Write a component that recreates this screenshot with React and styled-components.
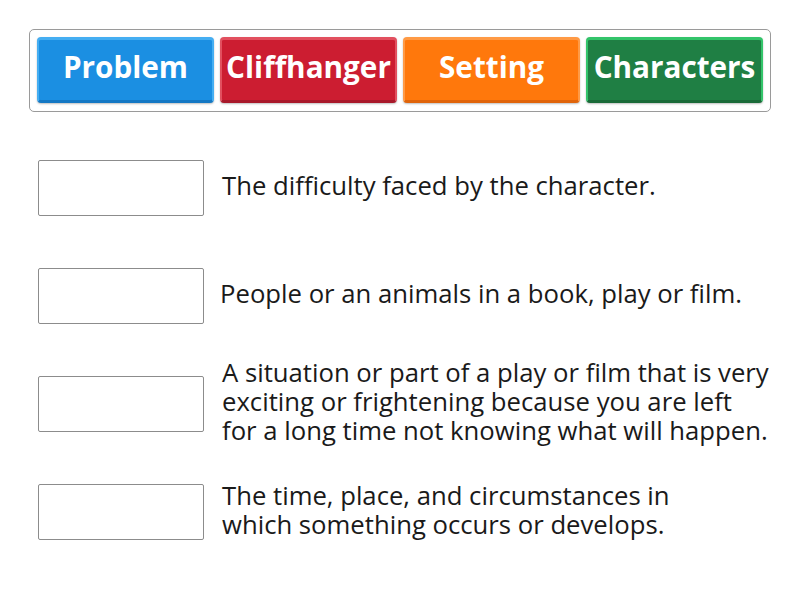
import styled, { createGlobalStyle } from 'styled-components';

const GlobalStyle = createGlobalStyle`
	body {
		margin: 0;
		background: #fff;
		font-family: 'Open Sans', 'Liberation Sans', sans-serif;
	}
`;

const TILES = [
	{ label: 'Problem', base: '#1b8fe2', light: '#45aef2', dark: '#1478c4' },
	{ label: 'Cliffhanger', base: '#cc1d31', light: '#e2505f', dark: '#a8182a' },
	{ label: 'Setting', base: '#ff780c', light: '#ff9a45', dark: '#e0640a' },
	{ label: 'Characters', base: '#1f7f44', light: '#33c46a', dark: '#196a38' },
];

const ROWS = [
	['The difficulty faced by the character.'],
	['People or an animals in a book, play or film.'],
	[
		'A situation or part of a play or film that is very',
		'exciting or frightening because you are left',
		'for a long time not knowing what will happen.',
	],
	['The time, place, and circumstances in', 'which something occurs or develops.'],
];

const Page = styled.div`
	width: 800px;
	height: 600px;
	padding: 29px 0 0 29px;
	box-sizing: border-box;
`;

const Tray = styled.div`
	display: flex;
	gap: 6px;
	width: 742px;
	height: 83px;
	box-sizing: border-box;
	padding: 7px 7px;
	border: 1px solid #9a9a9a;
	border-radius: 5px;
`;

const Tile = styled.div`
	flex: 0 0 177px;
	height: 66px;
	box-sizing: border-box;
	display: flex;
	align-items: center;
	justify-content: center;
	background: ${(p) => p.$base};
	border-radius: 4px;
	border-top: 3px solid ${(p) => p.$light};
	border-left: 2px solid ${(p) => p.$light};
	border-right: 2px solid ${(p) => p.$light};
	border-bottom: 3px solid ${(p) => p.$dark};
	box-shadow: 0 1px 2px rgba(0, 0, 0, 0.25);
	color: #fff;
	font-size: 29.7px;
	font-weight: 700;
	white-space: nowrap;
	padding-bottom: 8px;
`;

const List = styled.div`
	display: flex;
	flex-direction: column;
	gap: 53px;
	margin-top: 48px;
	padding-left: 9px;
`;

const Row = styled.div`
	display: flex;
	align-items: center;
	height: 55px;
`;

const Slot = styled.div`
	flex: 0 0 166px;
	height: 56px;
	box-sizing: border-box;
	border: 1px solid #8c8c8c;
	border-radius: 2px;
	background: #fff;
`;

const Definition = styled.div`
	margin-left: ${(p) => p.$indent}px;
	margin-top: -4px;
	font-size: 25.7px;
	line-height: 29px;
	color: #1a1a1a;
	white-space: nowrap;
`;

export default function App() {
	return (
		<Page>
			<GlobalStyle />
			<Tray>
				{TILES.map((t) => (
					<Tile key={t.label} $base={t.base} $light={t.light} $dark={t.dark}>
						{t.label}
					</Tile>
				))}
			</Tray>
			<List>
				{ROWS.map((lines, i) => (
					<Row key={i}>
						<Slot />
						<Definition $indent={i === 1 ? 16 : 18}>
							{lines.map((l) => (
								<div key={l}>{l}</div>
							))}
						</Definition>
					</Row>
				))}
			</List>
		</Page>
	);
}
